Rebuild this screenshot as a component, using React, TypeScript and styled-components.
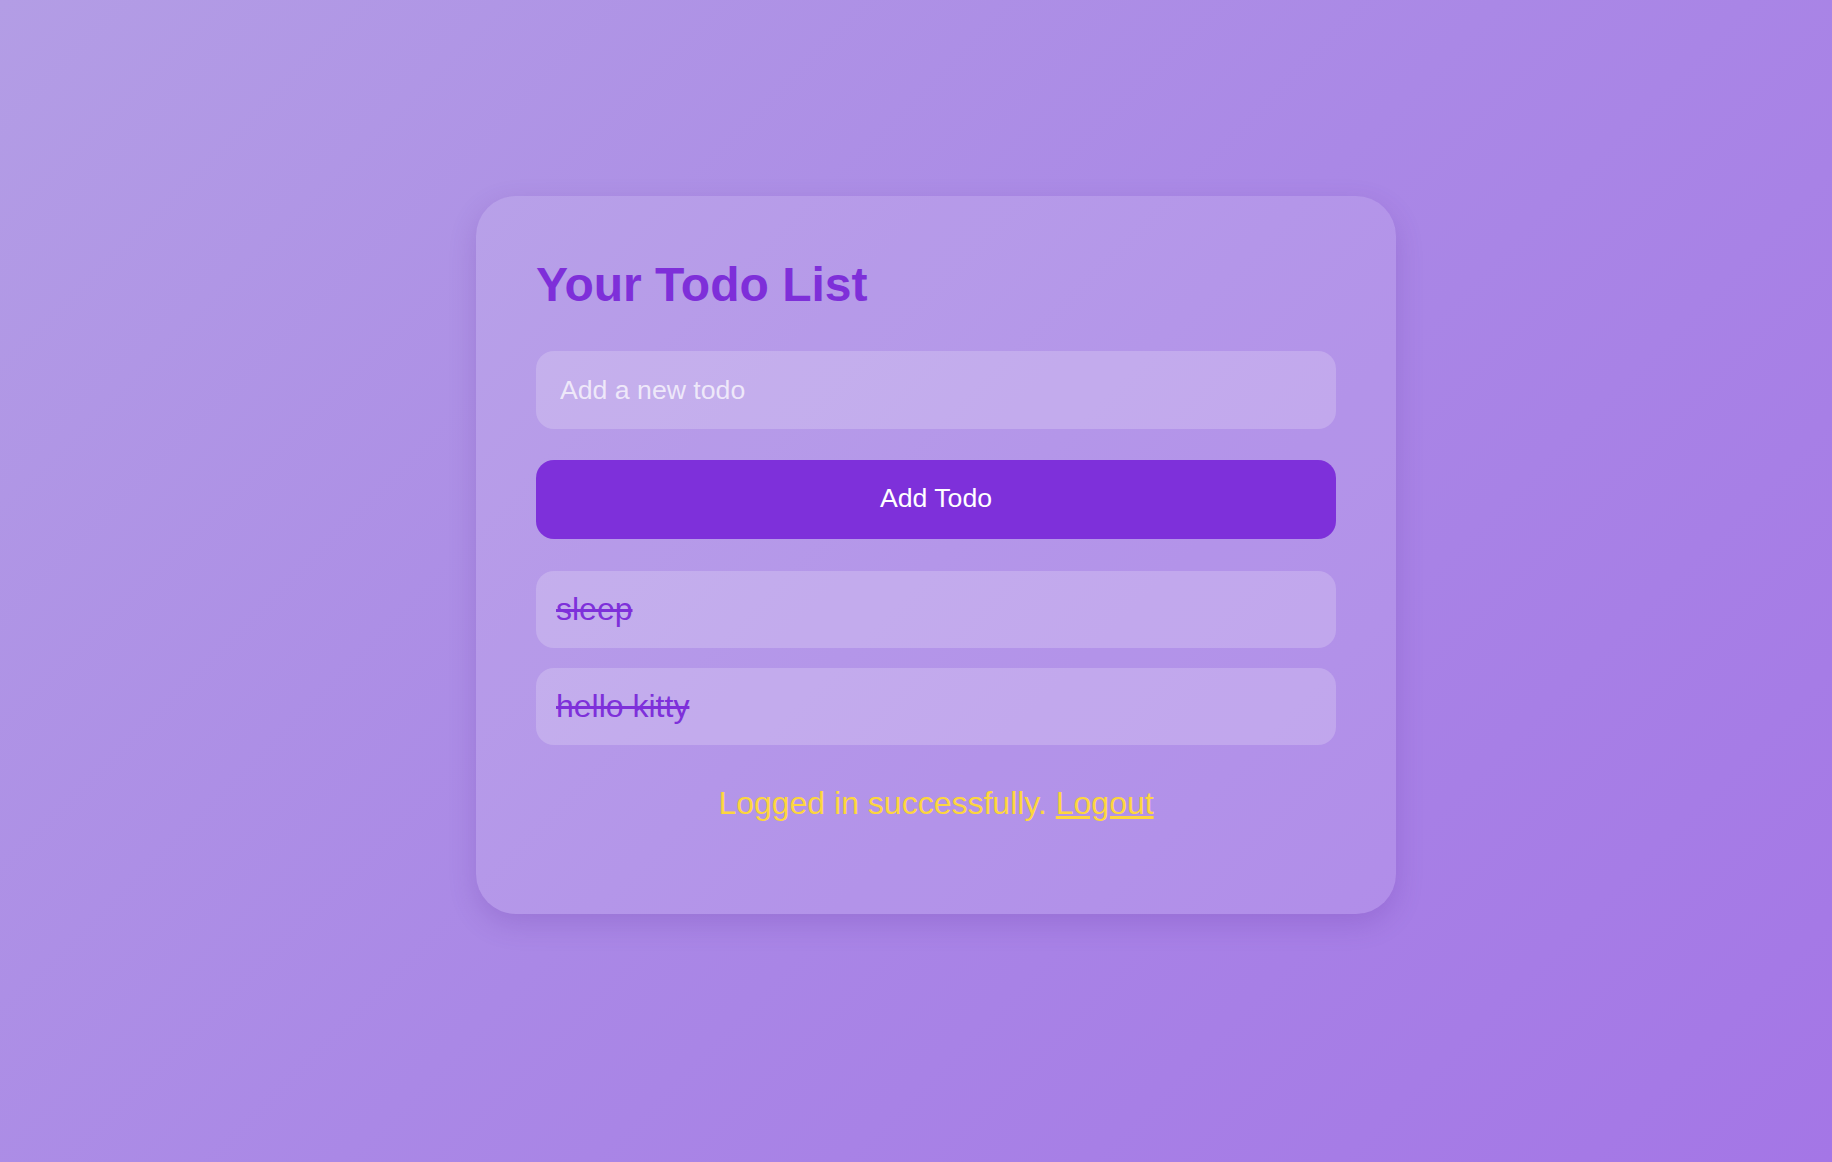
import React, { useState } from "react";
import styled, { createGlobalStyle } from "styled-components";

const GlobalStyle = createGlobalStyle`
  html, body {
    margin: 0;
    padding: 0;
    min-height: 100%;
  }
  body {
    font-family: "Liberation Sans", Arial, Helvetica, sans-serif;
    background: linear-gradient(135deg, #b39de5 0%, #aa88e6 50%, #a476e6 100%);
    background-attachment: fixed;
    min-height: 1162px;
  }
  * { box-sizing: border-box; }
`;

const Page = styled.div`
  min-height: 1162px;
  display: flex;
  justify-content: center;
  align-items: flex-start;
  padding: 196px 0 0 40px;
`;

const Card = styled.div`
  width: 920px;
  padding: 60px 60px 92px;
  border-radius: 40px;
  background: rgba(255, 255, 255, 0.12);
  box-shadow: 0 10px 28px rgba(90, 40, 150, 0.2);
  display: flex;
  flex-direction: column;
`;

const Title = styled.h1`
  margin: 0 0 37px;
  font-size: 48px;
  line-height: 58px;
  font-weight: 700;
  color: #7e2fd9;
`;

const Input = styled.input`
  height: 78px;
  width: 100%;
  border: none;
  outline: none;
  border-radius: 18px;
  padding: 0 24px;
  margin: 0 0 31px;
  background: rgba(255, 255, 255, 0.2);
  font-family: inherit;
  font-size: 26.67px;
  color: #4a1d8a;
  &::placeholder {
    color: rgba(255, 255, 255, 0.72);
  }
`;

const Button = styled.button`
  height: 79px;
  width: 100%;
  border: none;
  border-radius: 18px;
  background: #7e30da;
  color: #ffffff;
  font-family: inherit;
  font-size: 26.67px;
  cursor: pointer;
  margin: 0 0 32px;
  padding: 0 0 2px;
`;

const List = styled.ul`
  list-style: none;
  margin: 0;
  padding: 0;
  display: flex;
  flex-direction: column;
  gap: 20px;
`;

const Item = styled.li<{ $done: boolean }>`
  height: 77px;
  padding: 20px 20px;
  border-radius: 18px;
  background: rgba(255, 255, 255, 0.2);
  font-size: 32px;
  line-height: 37px;
  color: #7e30da;
  text-decoration: ${(p) => (p.$done ? "line-through" : "none")};
  cursor: pointer;
`;

const Footer = styled.p`
  margin: 40px 0 0;
  font-size: 32px;
  line-height: 37px;
  text-align: center;
  color: #fdd63e;
`;

const LogoutLink = styled.a`
  color: #fdd63e;
  text-decoration: underline;
  cursor: pointer;
`;

export default function App() {
  const [todos, setTodos] = useState([
    { id: 1, text: "sleep", done: true },
    { id: 2, text: "hello kitty", done: true },
  ]);
  const [value, setValue] = useState("");

  const add = () => {
    if (!value.trim()) return;
    setTodos([...todos, { id: Date.now(), text: value.trim(), done: false }]);
    setValue("");
  };

  return (
    <>
      <GlobalStyle />
      <Page>
        <Card>
          <Title>Your Todo List</Title>
          <Input
            placeholder="Add a new todo"
            value={value}
            onChange={(e) => setValue(e.target.value)}
          />
          <Button onClick={add}>Add Todo</Button>
          <List>
            {todos.map((t) => (
              <Item
                key={t.id}
                $done={t.done}
                onClick={() =>
                  setTodos(todos.map((x) => (x.id === t.id ? { ...x, done: !x.done } : x)))
                }
              >
                {t.text}
              </Item>
            ))}
          </List>
          <Footer>
            Logged in successfully. <LogoutLink>Logout</LogoutLink>
          </Footer>
        </Card>
      </Page>
    </>
  );
}
